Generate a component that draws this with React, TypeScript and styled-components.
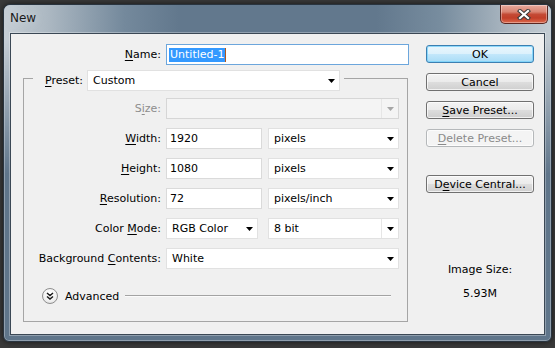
import React from 'react'
import styled, { createGlobalStyle } from 'styled-components'

const GlobalStyle = createGlobalStyle`
  html, body {
    margin: 0;
    padding: 0;
    background: #3a3a3a;
  }

  body {
    width: 555px;
    height: 348px;
    overflow: hidden;
    font-family: 'DejaVu Sans', Verdana, sans-serif;
    font-size: 11px;
    color: #000;
  }
`

const Screen = styled.div`
  width: 555px;
  height: 348px;
  box-sizing: border-box;
  padding: 4px 3px 0 3px;
`

const Window = styled.div`
  position: relative;
  width: 549px;
  height: 338px;
  box-sizing: border-box;
  border: 1px solid #29343f;
  border-radius: 7px 7px 6px 6px;
  background: #5f758a;
  display: flex;
  flex-direction: column;
  overflow: hidden;
  box-shadow: 0 0 6px rgba(0, 0, 0, 0.6), inset 0 0 0 1px rgba(255, 255, 255, 0.3);

  /* glassy light edges of the frame, fading out downwards */
  &::before {
    content: '';
    position: absolute;
    inset: 0;
    background: linear-gradient(
      90deg,
      #c6ced5 0%,
      #acb8c2 8%,
      #74899c 22%,
      #62788d 32%,
      #62788d 68%,
      #788d9f 80%,
      #aab6c0 92%,
      #c3ccd3 100%
    );
    mask-image: linear-gradient(180deg, #000 0, #000 36px, transparent 170px);
    pointer-events: none;
  }
`

const TitleBar = styled.div`
  position: relative;
  z-index: 1;
  height: 28px;
  flex: none;
  display: flex;
  justify-content: space-between;
  align-items: flex-start;
  padding-left: 6px;
`

const Title = styled.div`
  margin-top: 5px;
  font-size: 12px;
  line-height: 16px;
  color: #1a1a1a;
  text-shadow: 0 0 8px rgba(220, 228, 235, 0.7);
`

const CloseButton = styled.div`
  width: 48px;
  height: 19px;
  margin-right: 3px;
  box-sizing: border-box;
  border: 1px solid #5b2620;
  border-top: none;
  border-radius: 0 0 5px 5px;
  background: linear-gradient(
    180deg,
    #e8aa9d 0%,
    #d98472 38%,
    #c44a35 52%,
    #c23f29 72%,
    #dc6a4d 100%
  );
  box-shadow: inset 0 0 0 1px rgba(255, 255, 255, 0.35);
  display: flex;
  align-items: center;
  justify-content: center;
`

const Client = styled.div`
  position: relative;
  z-index: 1;
  flex: 1;
  margin: 0 6px 6px 6px;
  box-sizing: border-box;
  border: 1px solid #3b4855;
  background: #f0f0f0;
  box-shadow: 0 0 0 1px rgba(255, 255, 255, 0.3);
  display: flex;
  padding: 10px 0 0 12px;
`

const FormColumn = styled.div`
  width: 386px;
  display: flex;
  flex-direction: column;
`

const NameRow = styled.div`
  display: grid;
  grid-template-columns: 138px 243px;
  column-gap: 5px;
  height: 21px;
`

const Label = styled.div<{ $disabled?: boolean }>`
  display: flex;
  align-items: center;
  justify-content: flex-end;
  white-space: nowrap;
  color: ${(p) => (p.$disabled ? '#8d8d8d' : '#000')};
`

const Key = styled.span`
  text-decoration: underline;
  text-underline-offset: 2px;
  text-decoration-thickness: 1px;
`

const NameInput = styled.div`
  height: 21px;
  box-sizing: border-box;
  border: 1px solid #6ca6dc;
  background: #fff;
  display: flex;
  align-items: center;
  padding-left: 2px;
`

const Selection = styled.span`
  background: #3399ff;
  color: #fff;
  line-height: 14px;
  padding: 0 1px;
`

const Caret = styled.span`
  width: 1px;
  height: 14px;
  background: #b0561c;
`

const GroupBox = styled.div`
  margin-top: 13px;
  width: 385px;
  height: 244px;
  box-sizing: border-box;
  border: 1px solid #a5a5a5;
  display: flex;
  flex-direction: column;
`

const GroupHeader = styled.div`
  align-self: flex-start;
  margin: -9px 0 0 9px;
  padding: 0 4px 0 12px;
  background: #f0f0f0;
  display: flex;
  align-items: center;
  gap: 4px;
  height: 21px;
`

const FieldGrid = styled.div`
  margin-top: 7px;
  display: grid;
  grid-template-columns: 137px 233px;
  grid-auto-rows: 21px;
  column-gap: 5px;
  row-gap: 9px;
`

const FieldPair = styled.div<{ $gap: number }>`
  display: flex;
  gap: ${(p) => p.$gap}px;
`

const TextField = styled.div<{ $w: number }>`
  width: ${(p) => p.$w}px;
  height: 21px;
  box-sizing: border-box;
  border: 1px solid #dadada;
  background: #fff;
  display: flex;
  align-items: center;
  padding-left: 3px;
`

const SelectBox = styled.div<{ $w: number; $disabled?: boolean }>`
  width: ${(p) => p.$w}px;
  height: 21px;
  box-sizing: border-box;
  border: 1px solid ${(p) => (p.$disabled ? '#d6d6d6' : '#e1e1e1')};
  background: ${(p) => (p.$disabled ? '#f4f4f4' : '#fff')};
  display: flex;
  align-items: center;
  padding-left: 5px;
`

const SelectText = styled.span`
  flex: 1;
  white-space: nowrap;
`

const ArrowCell = styled.span<{ $split?: boolean }>`
  width: 16px;
  align-self: stretch;
  display: flex;
  align-items: center;
  justify-content: center;
  border-left: 1px solid ${(p) => (p.$split ? '#e6e6e6' : 'transparent')};
`

const AdvancedRow = styled.div`
  margin-top: 19px;
  height: 16px;
  display: flex;
  align-items: center;
  padding-left: 18px;
`

const RoundToggle = styled.div`
  width: 16px;
  height: 16px;
  box-sizing: border-box;
  border-radius: 50%;
  border: 1px solid #8e8e8e;
  background: radial-gradient(circle at 50% 35%, #ffffff 0%, #f3f3f3 55%, #d9d9d9 100%);
  display: flex;
  align-items: center;
  justify-content: center;
`

const AdvancedText = styled.span`
  margin-left: 7px;
`

const Rule = styled.div`
  flex: 1;
  margin: 0 16px 0 6px;
  border-top: 1px solid #a3a3a3;
  border-bottom: 1px solid #fbfbfb;
`

const ButtonColumn = styled.div`
  margin-left: 17px;
  padding-top: 1px;
  width: 108px;
  display: flex;
  flex-direction: column;
  gap: 10px;
`

const Button = styled.div<{ $default?: boolean; $disabled?: boolean; $push?: number }>`
  height: 18px;
  box-sizing: border-box;
  margin-top: ${(p) => p.$push ?? 0}px;
  border-radius: 3px;
  display: flex;
  align-items: center;
  justify-content: center;
  white-space: nowrap;
  border: 1px solid
    ${(p) => (p.$default ? '#3c7fb1' : p.$disabled ? '#b5b8ba' : '#707070')};
  color: ${(p) => (p.$disabled ? '#8a8a8a' : '#000')};
  background: ${(p) =>
    p.$default
      ? 'linear-gradient(180deg, #e9f6fd 0%, #dcf1fc 48%, #c2e7fb 52%, #a9dcf6 100%)'
      : p.$disabled
        ? '#f4f4f4'
        : 'linear-gradient(180deg, #f3f3f3 0%, #ebebeb 48%, #dddddd 52%, #cfcfcf 100%)'};
  box-shadow: inset 0 0 0 1px
    ${(p) => (p.$default ? 'rgba(120, 210, 250, 0.8)' : 'rgba(255, 255, 255, 0.7)')};
`

const SizeInfo = styled.div`
  margin-top: 60px;
  display: flex;
  flex-direction: column;
  align-items: center;
  gap: 11px;
  line-height: 13px;
`

const Arrow = ({ disabled }: { disabled?: boolean }) => (
  <svg width="7" height="4" viewBox="0 0 7 4">
    <polygon points="0,0 7,0 3.5,4" fill={disabled ? '#a6a6a6' : '#000'} />
  </svg>
)

const Select = ({
  w,
  value,
  disabled,
  split,
}: {
  w: number
  value?: string
  disabled?: boolean
  split?: boolean
}) => (
  <SelectBox $w={w} $disabled={disabled}>
    <SelectText>{value}</SelectText>
    <ArrowCell $split={split}>
      <Arrow disabled={disabled} />
    </ArrowCell>
  </SelectBox>
)

const CloseIcon = () => (
  <svg width="14" height="11" viewBox="0 0 14 11">
    <path d="M3 2 L11 9 M11 2 L3 9" stroke="#3a3a3a" strokeWidth="4.2" strokeLinecap="square" />
    <path d="M3 2 L11 9 M11 2 L3 9" stroke="#fff" strokeWidth="2.2" strokeLinecap="square" />
  </svg>
)

const ChevronsDown = () => (
  <svg width="8" height="8" viewBox="0 0 8 8">
    <path d="M1 1 L4 3.5 L7 1 M1 4.5 L4 7 L7 4.5" fill="none" stroke="#1a1a1a" strokeWidth="1.5" />
  </svg>
)

export default function App() {
  return (
    <Screen>
      <GlobalStyle />
      <Window>
        <TitleBar>
          <Title>New</Title>
          <CloseButton>
            <CloseIcon />
          </CloseButton>
        </TitleBar>

        <Client>
          <FormColumn>
            <NameRow>
              <Label>
                <span>
                  <Key>N</Key>ame:
                </span>
              </Label>
              <NameInput>
                <Selection>Untitled-1</Selection>
                <Caret />
              </NameInput>
            </NameRow>

            <GroupBox>
              <GroupHeader>
                <Label>
                  <span>
                    <Key>P</Key>reset:
                  </span>
                </Label>
                <Select w={253} value="Custom" />
              </GroupHeader>

              <FieldGrid>
                <Label $disabled>
                  <span>
                    S<Key>i</Key>ze:
                  </span>
                </Label>
                <Select w={233} disabled split />

                <Label>
                  <span>
                    <Key>W</Key>idth:
                  </span>
                </Label>
                <FieldPair $gap={6}>
                  <TextField $w={96}>1920</TextField>
                  <Select w={131} value="pixels" />
                </FieldPair>

                <Label>
                  <span>
                    <Key>H</Key>eight:
                  </span>
                </Label>
                <FieldPair $gap={6}>
                  <TextField $w={96}>1080</TextField>
                  <Select w={131} value="pixels" />
                </FieldPair>

                <Label>
                  <span>
                    <Key>R</Key>esolution:
                  </span>
                </Label>
                <FieldPair $gap={6}>
                  <TextField $w={96}>72</TextField>
                  <Select w={131} value="pixels/inch" />
                </FieldPair>

                <Label>
                  <span>
                    Color <Key>M</Key>ode:
                  </span>
                </Label>
                <FieldPair $gap={10}>
                  <Select w={92} value="RGB Color" />
                  <Select w={131} value="8 bit" split />
                </FieldPair>

                <Label>
                  <span>
                    Background <Key>C</Key>ontents:
                  </span>
                </Label>
                <Select w={233} value="White" />
              </FieldGrid>

              <AdvancedRow>
                <RoundToggle>
                  <ChevronsDown />
                </RoundToggle>
                <AdvancedText>Advanced</AdvancedText>
                <Rule />
              </AdvancedRow>
            </GroupBox>
          </FormColumn>

          <ButtonColumn>
            <Button $default>OK</Button>
            <Button>Cancel</Button>
            <Button>
              <span>
                <Key>S</Key>ave Preset...
              </span>
            </Button>
            <Button $disabled>
              <span>
                <Key>D</Key>elete Preset...
              </span>
            </Button>
            <Button $push={18}>
              <span>
                D<Key>e</Key>vice Central...
              </span>
            </Button>

            <SizeInfo>
              <span>Image Size:</span>
              <span>5.93M</span>
            </SizeInfo>
          </ButtonColumn>
        </Client>
      </Window>
    </Screen>
  )
}
